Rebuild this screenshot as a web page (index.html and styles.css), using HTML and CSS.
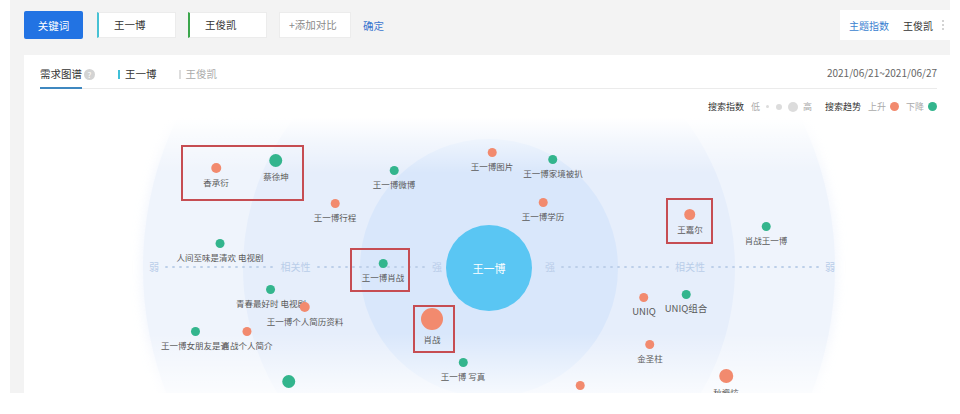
FILE: index.html
```html
<!DOCTYPE html>
<html lang="zh">
<head>
<meta charset="utf-8">
<title>需求图谱</title>
<link rel="stylesheet" href="styles.css">
</head>
<body>
<div class="page">
  <div class="topbar">
    <div class="controls">
      <button class="btn-primary">关键词</button>
      <div class="kw kw-cyan">王一博</div>
      <div class="kw kw-green">王俊凯</div>
      <div class="kw kw-add">+添加对比</div>
      <a class="confirm">确定</a>
    </div>
    <div class="subject">
      <span class="subject-link">主题指数</span>
      <span class="subject-name">王俊凯</span>
      <span class="subject-more"><i></i><i></i><i></i></span>
    </div>
  </div>

  <div class="card">
    <div class="tabs">
      <div class="tab active">需求图谱 <span class="help">?</span></div>
      <div class="tab series"><i class="bar bar-cyan"></i>王一博</div>
      <div class="tab series muted"><i class="bar bar-gray"></i>王俊凯</div>
      <div class="date">2021/06/21~2021/06/27</div>
    </div>

    <div class="legend">
      <span class="lg-title">搜索指数</span>
      <span class="lg-text">低</span>
      <i class="sz sz1"></i><i class="sz sz2"></i><i class="sz sz3"></i>
      <span class="lg-text">高</span>
      <span class="lg-title lg-gap">搜索趋势</span>
      <span class="lg-text">上升</span><i class="lg-dot up"></i>
      <span class="lg-text">下降</span><i class="lg-dot down"></i>
    </div>

    <div class="diagram">
      <div class="ring ring-outer"></div>
      <div class="ring ring-mid"></div>
      <div class="ring ring-inner"></div>
      <div class="fade"></div>

      <div class="axis axis-left">
        <span>弱</span><i class="dots"></i><span>相关性</span><i class="dots"></i><span>强</span>
      </div>
      <div class="axis axis-right">
        <span>强</span><i class="dots"></i><span>相关性</span><i class="dots"></i><span>弱</span>
      </div>

      <div class="center">王一博</div>

      <div class="node" style="left:192px;top:50px"><i class="dot up s10"></i><span>香承衍</span></div>
      <div class="node" style="left:252px;top:42px"><i class="dot down s13"></i><span>蔡徐坤</span></div>
      <div class="node" style="left:370px;top:52px"><i class="dot down s9"></i><span>王一博微博</span></div>
      <div class="node" style="left:311px;top:85px"><i class="dot up s9"></i><span>王一博行程</span></div>
      <div class="node" style="left:468px;top:34px"><i class="dot up s9"></i><span>王一博图片</span></div>
      <div class="node" style="left:529px;top:41px"><i class="dot down s9"></i><span>王一博家境被扒</span></div>
      <div class="node" style="left:519px;top:84px"><i class="dot up s9"></i><span>王一博学历</span></div>
      <div class="node" style="left:666px;top:96px"><i class="dot up s11"></i><span>王嘉尔</span></div>
      <div class="node" style="left:742px;top:108px"><i class="dot down s9"></i><span>肖战王一博</span></div>
      <div class="node" style="left:196px;top:125px"><i class="dot down s9"></i><span>人间至味是清欢 电视剧</span></div>
      <div class="node" style="left:359px;top:145px"><i class="dot down s9"></i><span>王一博肖战</span></div>
      <div class="node" style="left:247px;top:171px"><i class="dot down s9"></i><span>青春最好时 电视剧</span></div>
      <div class="node" style="left:281px;top:189px"><i class="dot up s10"></i><span>王一博个人简历资料</span></div>
      <div class="node" style="left:171px;top:213px"><i class="dot down s9"></i><span>王一博女朋友是谁</span></div>
      <div class="node" style="left:223px;top:213px"><i class="dot up s9"></i><span>肖战个人简介</span></div>
      <div class="node" style="left:408px;top:201px"><i class="dot up s22"></i><span>肖战</span></div>
      <div class="node" style="left:439px;top:244px"><i class="dot down s9"></i><span>王一博 写真</span></div>
      <div class="node" style="left:620px;top:179px"><i class="dot up s9"></i><span class="latin">UNIQ</span></div>
      <div class="node" style="left:662px;top:176px"><i class="dot down s9"></i><span class="latin">UNIQ组合</span></div>
      <div class="node" style="left:626px;top:226px"><i class="dot up s9"></i><span>金圣柱</span></div>
      <div class="node" style="left:702px;top:258px"><i class="dot up s14"></i><span>秋瓷炫</span></div>
      <div class="node" style="left:556px;top:267px"><i class="dot up s9"></i><span>王一博综艺</span></div>
      <div class="node" style="left:265px;top:263px"><i class="dot down s13"></i><span>刘雨昕</span></div>

      <div class="mark" style="left:157px;top:27px;width:123px;height:56px"></div>
      <div class="mark" style="left:642px;top:80px;width:47px;height:46px"></div>
      <div class="mark" style="left:326px;top:130px;width:60px;height:44px"></div>
      <div class="mark" style="left:389px;top:187px;width:42px;height:48px"></div>
    </div>
  </div>
</div>
</body>
</html>
```

FILE: styles.css
```css
* { box-sizing: border-box; }
html, body { margin: 0; padding: 0; background: #fff; }
body {
  font-family: "Noto Sans CJK SC", "Noto Sans", sans-serif;
  color: #333;
  width: 960px;
  height: 414px;
  overflow: hidden;
}
.page {
  margin-left: 10px;
  width: 940px;
  height: 393px;
  background: #f3f3f3;
  overflow: hidden;
  display: flex;
  flex-direction: column;
}
.topbar {
  height: 55px;
  display: flex;
  justify-content: space-between;
  align-items: flex-start;
  padding-left: 14px;
}
.controls {
  display: flex;
  align-items: center;
  margin-top: 11px;
  height: 28px;
}
.btn-primary {
  width: 59px;
  height: 28px;
  border: 0;
  border-radius: 2px;
  background: #2273e3;
  color: #fff;
  font-family: inherit;
  font-size: 10.5px;
  padding: 0;
  margin-right: 14px;
}
.kw {
  height: 26px;
  background: #fff;
  border: 1px solid #ececec;
  font-size: 10.5px;
  line-height: 24px;
  margin-right: 12px;
  width: 79px;
  padding-left: 15px;
}
.kw-cyan { border-left: 2px solid #47c2d4; }
.kw-green { border-left: 2px solid #3ba64c; }
.kw-add {
  width: 72px;
  color: #8a8a8a;
  padding-left: 9px;
}
.confirm {
  color: #3a76cf;
  font-size: 10.5px;
}
.subject {
  margin-top: 10px;
  height: 30px;
  width: 110px;
  background: #fff;
  display: flex;
  align-items: center;
  padding-left: 9px;
  font-size: 10px;
  white-space: nowrap;
}
.subject-link { color: #3a7fd0; margin-right: 14px; }
.subject-name { color: #333; margin-right: 9px; }
.subject-more {
  display: flex;
  flex-direction: column;
  gap: 2px;
}
.subject-more i {
  display: block;
  width: 2px;
  height: 2px;
  border-radius: 50%;
  background: #c4c4c4;
}

.card {
  margin-left: 14px;
  flex: 1;
  background: #fff;
  padding: 0 13px 0 16px;
  display: flex;
  flex-direction: column;
  overflow: hidden;
}
.tabs {
  height: 34px;
  border-bottom: 1px solid #ebebeb;
  display: flex;
  align-items: flex-end;
  font-size: 10.5px;
}
.tab {
  line-height: 14px;
  padding-bottom: 6px;
  border-bottom: 2px solid transparent;
  margin-bottom: -1px;
  display: flex;
  align-items: center;
  color: #333;
}
.tab.active {
  border-bottom-color: #3f88c0;
  position: relative;
  margin-right: 26px;
}
.tab.active .help {
  position: absolute;
  left: 44px;
  top: 2px;
  width: 11px;
  height: 11px;
  border-radius: 50%;
  background: #d3d3d3;
  color: #fff;
  font-size: 8px;
  line-height: 11px;
  text-align: center;
}
.series { margin-left: 10px; margin-right: 12px; }
.series.muted { color: #aaa; }
.bar {
  display: inline-block;
  width: 2px;
  height: 9px;
  margin-right: 5px;
}
.bar-cyan { background: #3fc0d8; }
.bar-gray { background: #ddd; }
.date {
  margin-left: auto;
  color: #666;
  font-size: 10px;
  line-height: 14px;
  padding-bottom: 8px;
}

.legend {
  height: 29px;
  padding-top: 11px;
  display: flex;
  justify-content: flex-end;
  align-items: center;
  font-size: 9px;
  line-height: 13px;
  padding-bottom: 5px;
}
.lg-title { color: #333; margin-right: 5px; }
.lg-gap { margin-left: 11px; }
.lg-text { color: #aaa; margin: 0 2px; }
.sz {
  display: inline-block;
  border-radius: 50%;
  background: #dcdcdc;
}
.sz1 { width: 3px; height: 3px; margin: 0 4px; }
.sz2 { width: 6px; height: 6px; margin: 0 3px; }
.sz3 { width: 10px; height: 10px; margin: 0 3px; }
.lg-dot {
  display: inline-block;
  width: 9px;
  height: 9px;
  border-radius: 50%;
  margin: 0 5px 0 2px;
}
.lg-dot.down { margin-right: 0; }

.up { background: #f28a6e; }
.down { background: #33b58d; }

.diagram {
  position: relative;
  margin: 0 -13px 0 -16px;
  flex: 1;
  overflow: hidden;
}
.ring {
  position: absolute;
  border-radius: 50%;
  transform: translate(-50%, -50%);
  left: 465px;
  top: 150px;
}
.ring-outer {
  width: 692px;
  height: 692px;
  background: #eff4fc;
  box-shadow: 0 0 10px 3px rgba(239, 244, 252, 0.7);
}
.ring-mid {
  width: 492px;
  height: 492px;
  background: #e6eefb;
}
.ring-inner {
  width: 258px;
  height: 258px;
  background: #d9e7fb;
}
.fade {
  position: absolute;
  inset: 0;
  background: linear-gradient(to bottom,
    rgba(255,255,255,1) 0,
    rgba(255,255,255,0.55) 22px,
    rgba(255,255,255,0) 55px,
    rgba(255,255,255,0) 215px,
    rgba(255,255,255,0.75) 275px);
}
.axis {
  position: absolute;
  top: 142px;
  height: 13px;
  display: flex;
  align-items: center;
  gap: 4px;
  color: #b9cde9;
  font-size: 10px;
  line-height: 13px;
}
.axis-left { left: 125px; width: 293px; }
.axis-right { left: 521px; width: 290px; }
.dots {
  flex: 1;
  height: 4px;
  background: radial-gradient(circle, #bccfe9 1px, rgba(188,207,233,0) 1.4px) repeat-x;
  background-size: 7px 4px;
}
.center {
  position: absolute;
  left: 422px;
  top: 107px;
  width: 86px;
  height: 86px;
  border-radius: 50%;
  background: #5ac6f3;
  color: #fff;
  font-size: 11px;
  display: flex;
  align-items: center;
  justify-content: center;
}
.node {
  position: absolute;
  transform: translateX(-50%);
  display: flex;
  flex-direction: column;
  align-items: center;
  white-space: nowrap;
}
.node span {
  margin-top: 4px;
  font-size: 8.5px;
  line-height: 11px;
  color: #5a5a5a;
}
.node span.latin { font-size: 9.5px; }
.dot { display: block; border-radius: 50%; }
.s9 { width: 9px; height: 9px; margin-top: -4.5px; }
.s10 { width: 10px; height: 10px; margin-top: -5px; }
.s11 { width: 11px; height: 11px; margin-top: -5.5px; }
.s13 { width: 13px; height: 13px; margin-top: -6.5px; }
.s14 { width: 14px; height: 14px; margin-top: -7px; }
.s22 { width: 22px; height: 22px; margin-top: -11px; }
.mark {
  position: absolute;
  border: 2px solid #c64d52;
}
```
